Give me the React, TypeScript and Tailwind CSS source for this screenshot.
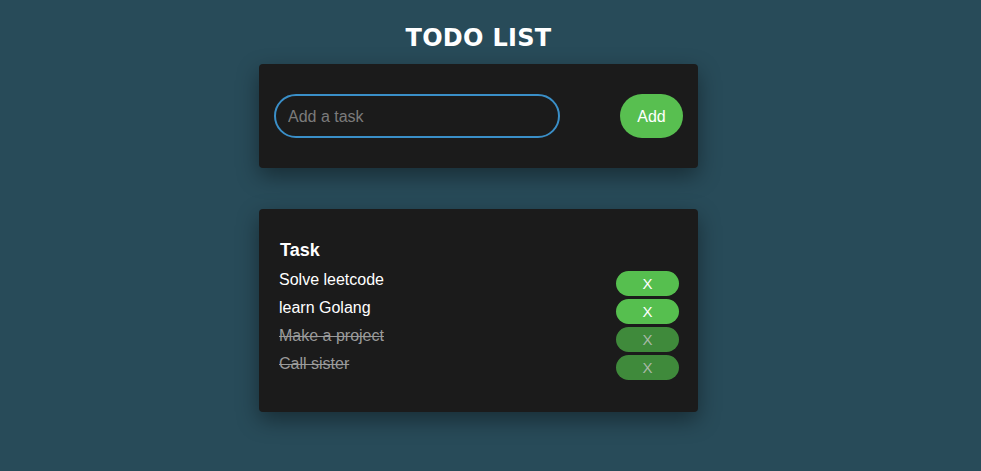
import React, { useState } from 'react';

interface Task {
  id: number;
  title: string;
  done: boolean;
}

const initialTasks: Task[] = [
  { id: 1, title: 'Solve leetcode', done: false },
  { id: 2, title: 'learn Golang', done: false },
  { id: 3, title: 'Make a project', done: true },
  { id: 4, title: 'Call sister', done: true },
];

export default function App() {
  const [tasks, setTasks] = useState<Task[]>(initialTasks);
  const [text, setText] = useState('');

  const addTask = () => {
    if (!text.trim()) return;
    setTasks([...tasks, { id: Date.now(), title: text.trim(), done: false }]);
    setText('');
  };

  return (
    <div className="min-h-[471px] bg-[#284b59] pr-[24px] flex flex-col items-center font-['Liberation_Sans',Arial,sans-serif]">
      <h1 className="mt-[24px] h-[28px] text-[24px] leading-[28px] font-black text-white tracking-[0.3px] font-['DejaVu_Sans',sans-serif]">
        TODO LIST
      </h1>

      {/* Input card */}
      <div className="mt-[12px] w-[439px] h-[104px] rounded-[4px] bg-[#1b1b1b] shadow-[0_8px_22px_rgba(0,0,0,0.4)] px-[15px] flex items-center justify-between">
        <input
          value={text}
          onChange={e => setText(e.target.value)}
          placeholder="Add a task"
          className="w-[286px] h-[44px] box-border rounded-full border-2 border-[#3a8fc8] bg-transparent px-[12px] pt-[2px] text-[16px] text-white placeholder:text-[#7b7b7b] outline-none"
        />
        <button
          onClick={addTask}
          className="w-[63px] h-[44px] rounded-full bg-[#58bf50] text-white text-[16px] pt-[2px]"
        >
          Add
        </button>
      </div>

      {/* Task list card */}
      <div className="mt-[41px] w-[439px] h-[203px] rounded-[4px] bg-[#1b1b1b] shadow-[0_8px_22px_rgba(0,0,0,0.4)] pl-[20px] pr-[19px] pt-[30px]">
        <h2 className="text-[18px] leading-[22px] font-bold text-white ml-[1px]">Task</h2>
        <div className="mt-[10px] flex flex-col gap-[3px]">
          {tasks.map(task => (
            <div key={task.id} className="flex items-start justify-between h-[25px]">
              <span
                className={
                  task.done
                    ? 'text-[16px] leading-[18px] text-[#9a9a9a] line-through'
                    : 'text-[16px] leading-[18px] text-white'
                }
              >
                {task.title}
              </span>
              <button
                onClick={() => setTasks(tasks.filter(t => t.id !== task.id))}
                className={
                  task.done
                    ? 'w-[63px] h-[25px] rounded-full bg-[#3f8a3b] text-[#a8b8a6] text-[15px] leading-[25px]'
                    : 'w-[63px] h-[25px] rounded-full bg-[#56bf4f] text-white text-[15px] leading-[25px]'
                }
              >
                X
              </button>
            </div>
          ))}
        </div>
      </div>
    </div>
  );
}
